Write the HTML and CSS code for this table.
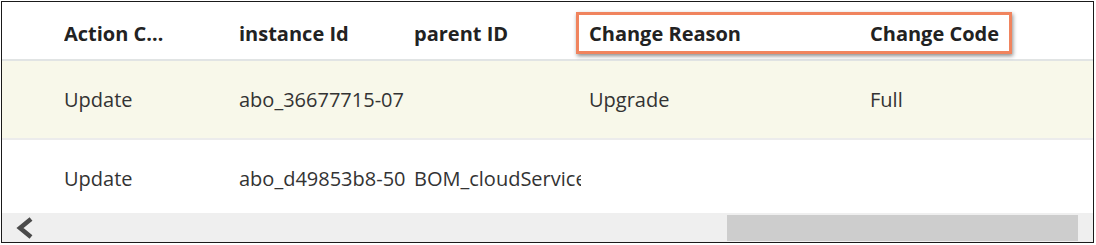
FILE: index.html
```html
<!DOCTYPE html>
<html lang="en">
<head>
    <meta charset="UTF-8">
    <title>Subscription Changes</title>
    <link rel="stylesheet" href="styles.css">
</head>
<body>
    <div class="grid-frame">
        <div class="grid-header">
            <div class="cell spacer"></div>
            <div class="cell"><span class="label short">Action Code</span></div>
            <div class="cell"><span class="label">instance Id</span></div>
            <div class="cell"><span class="label">parent ID</span></div>
            <div class="cell"><span class="label">Change Reason</span></div>
            <div class="cell"><span class="label">Change Code</span></div>
            <div class="cell"></div>
            <div class="callout"></div>
        </div>

        <div class="grid-body">
            <div class="grid-row selected">
                <div class="cell spacer"></div>
                <div class="cell">Update</div>
                <div class="cell">abo_36677715-07</div>
                <div class="cell"></div>
                <div class="cell">Upgrade</div>
                <div class="cell">Full</div>
                <div class="cell"></div>
            </div>
            <div class="grid-row">
                <div class="cell spacer"></div>
                <div class="cell">Update</div>
                <div class="cell">abo_d49853b8-5024-4c1e</div>
                <div class="cell">BOM_cloudServices</div>
                <div class="cell"></div>
                <div class="cell"></div>
                <div class="cell"></div>
            </div>
        </div>

        <div class="hscroll">
            <span class="arrow">
                <svg width="20" height="22" viewBox="0 0 20 22">
                    <polyline points="16,2 5,11 16,20" fill="none" stroke="#4a4a4a" stroke-width="4.5" stroke-linejoin="miter"/>
                </svg>
            </span>
            <div class="track">
                <div class="thumb"></div>
            </div>
        </div>
    </div>
</body>
</html>
```

FILE: styles.css
```css
body {
    margin: 0;
    background: #fff;
    font-family: "Open Sans", "Noto Sans", sans-serif;
    font-size: 20px;
    color: #333;
}
.grid-frame {
    margin: 1px;
    width: 1091px;
    height: 240px;
    border: 1px solid #1a1a1a;
    display: flex;
    flex-direction: column;
    overflow: hidden;
}
.grid-header,
.grid-row {
    display: grid;
    grid-template-columns: 54px 175px 175px 175px 281px 175px 1fr;
    flex-shrink: 0;
}
.grid-header {
    position: relative;
    height: 57px;
    border-bottom: 2px solid #e1e4e4;
    align-items: center;
    padding-top: 5px;
    box-sizing: border-box;
    height: 59px;
    font-weight: 700;
    color: #222;
}
.grid-body {
    height: 152px;
    overflow: hidden;
}
.grid-row {
    height: 79px;
    align-items: center;
    border-bottom: 2px solid #ececec;
    box-sizing: border-box;
}
.grid-row.selected {
    background: #f8f8ea;
}
.cell {
    padding-left: 8px;
    white-space: nowrap;
    overflow: hidden;
    line-height: 27px;
}
.cell.spacer {
    padding: 0;
}
.label {
    display: inline-block;
    max-width: 104px;
    overflow: hidden;
    text-overflow: ellipsis;
    vertical-align: top;
}
.label:not(.short) {
    max-width: none;
}
.callout {
    position: absolute;
    left: 574px;
    top: 10px;
    width: 430px;
    height: 36px;
    border: 3px solid #f0845e;
    box-shadow: 1px 2px 4px rgba(0, 0, 0, 0.45);
    pointer-events: none;
}
.hscroll {
    flex: 1;
    display: flex;
    background: #efefef;
}
.arrow {
    width: 40px;
    display: flex;
    align-items: center;
    padding-left: 13px;
    box-sizing: border-box;
}
.track {
    flex: 1;
    display: flex;
    justify-content: flex-end;
    padding: 2px 15px 1px 0;
}
.thumb {
    width: 351px;
    background: #cdcdcd;
}
```
